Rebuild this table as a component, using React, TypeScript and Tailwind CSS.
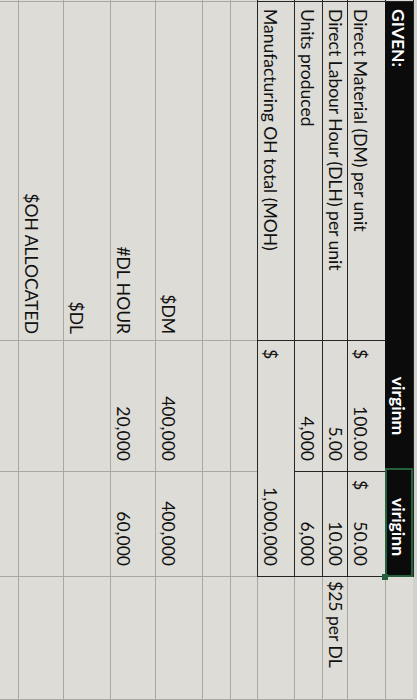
const grid = "border-r border-b border-[#a9a9a2]";
const dark = "border-r border-b border-[#262626]";

type CellProps = {
  className?: string;
  children?: React.ReactNode;
};

function Cell({ className = "", children }: CellProps) {
  return (
    <div className={`flex items-end pb-[4px] leading-none whitespace-nowrap overflow-visible ${className}`}>
      {children}
    </div>
  );
}

function Money({ value, className = "" }: { value: string; className?: string }) {
  return (
    <div className={`flex items-end justify-between pb-[4px] leading-none pl-[8px] pr-[10px] ${dark} ${className}`}>
      <span>$</span>
      <span>{value}</span>
    </div>
  );
}

function EmptyRow() {
  return (
    <>
      <Cell className={grid} />
      <Cell className={grid} />
      <Cell className={grid} />
      <Cell className={grid} />
      <Cell className={grid} />
    </>
  );
}

function CalcRow({ label, b, c }: { label: string; b?: string; c?: string }) {
  return (
    <>
      <Cell className={grid} />
      <Cell className={`${grid} justify-end pr-[6px]`}>{label}</Cell>
      <Cell className={`${grid} justify-end pr-[10px]`}>{b}</Cell>
      <Cell className={`${grid} justify-end pr-[10px]`}>{c}</Cell>
      <Cell className={grid} />
    </>
  );
}

export default function App() {
  return (
    <div className="w-[417px] h-[700px] overflow-hidden bg-[#dddcd6]">
      <div
        className="w-[700px] h-[417px] origin-top-left translate-x-[417px] rotate-90 grid grid-cols-[2px_339px_131px_105px_123px] grid-rows-[4px_28px_38px_25px_28px_37px_27px_28px_47px_45px_47px_45px_30px] text-[17.5px] text-[#111111] bg-[#dddcd6]"
        style={{ fontFamily: "Lato, 'Open Sans', sans-serif" }}
      >
        {/* strip above header */}
        <div className="border-b border-[#262626] bg-[#cfd3cc]" />
        <div className="border-b border-[#262626] bg-[#cfd3cc]" />
        <div className="border-b border-[#262626] bg-[#cfd3cc]" />
        <div className="border-b border-[#262626] bg-[#cfd3cc]" />
        <div className="bg-[#cfd3cc]" />

        {/* header */}
        <Cell className={dark} />
        <Cell className="bg-[#0b0b0b] border-r border-b border-[#0b0b0b] text-white font-bold pl-[7px]">GIVEN:</Cell>
        <Cell className="bg-[#0b0b0b] border-r border-b border-[#0b0b0b] text-white font-bold justify-center">virginm</Cell>
        <Cell className="relative bg-[#0b0b0b] border-r border-b border-[#262626] text-white font-bold justify-center pl-[6px]">
          viriginn
          <span className="absolute -left-[4px] top-0 -right-[1px] -bottom-[1px] border-2 border-[#25603a]" />
          <span className="absolute -right-[4px] -bottom-[4px] w-[6px] h-[6px] bg-[#25603a]" />
        </Cell>
        <Cell className={grid} />

        {/* DM */}
        <Cell className={dark} />
        <Cell className={`${dark} pl-[7px]`}>Direct Material (DM) per unit</Cell>
        <Money value="100.00" />
        <Money value="50.00" />
        <Cell className={grid} />

        {/* DLH */}
        <Cell className={dark} />
        <Cell className={`${dark} pl-[7px]`}>Direct Labour Hour (DLH) per unit</Cell>
        <Cell className={`${dark} justify-end pr-[10px]`}>5.00</Cell>
        <Cell className={`${dark} justify-end pr-[10px]`}>10.00</Cell>
        <Cell className={`${grid} pl-[4px]`}>$25 per DL</Cell>

        {/* units */}
        <Cell className={dark} />
        <Cell className={`${dark} pl-[7px]`}>Units produced</Cell>
        <Cell className={`${dark} justify-end pr-[10px]`}>4,000</Cell>
        <Cell className={`${dark} justify-end pr-[10px]`}>6,000</Cell>
        <Cell className={grid} />

        {/* MOH */}
        <Cell className={dark} />
        <Cell className={`${dark} pl-[7px]`}>Manufacturing OH total (MOH)</Cell>
        <Money value="1,000,000" className="col-span-2" />
        <Cell className={grid} />

        <EmptyRow />
        <EmptyRow />

        <CalcRow label="$DM" b="400,000" c="400,000" />
        <CalcRow label="#DL HOUR" b="20,000" c="60,000" />
        <CalcRow label="$DL" />
        <CalcRow label="$OH ALLOCATED" />
        <EmptyRow />
      </div>
    </div>
  );
}
